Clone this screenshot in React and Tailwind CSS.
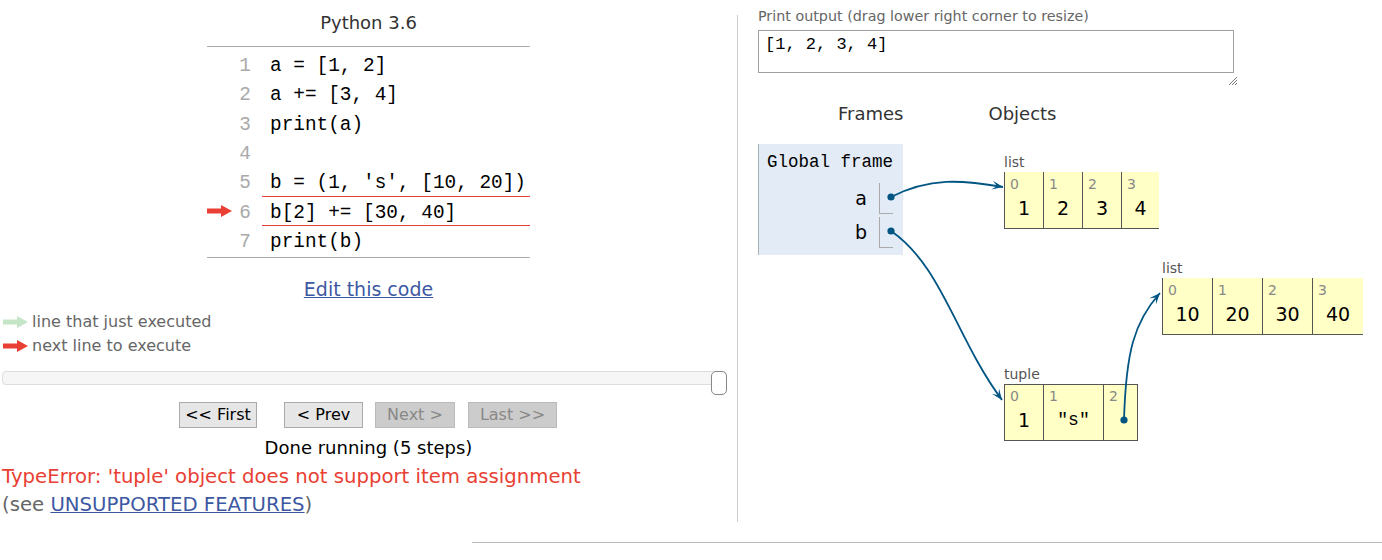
import React from "react";

const SANS = "font-['DejaVu_Sans','Verdana',sans-serif]";
const MONO = "font-['Liberation_Mono','Courier_New',monospace]";

const codeLines = [
  "a = [1, 2]",
  "a += [3, 4]",
  "print(a)",
  "",
  "b = (1, 's', [10, 20])",
  "b[2] += [30, 40]",
  "print(b)",
];

const LegendArrow = ({ color }) => (
  <svg width="25" height="12" viewBox="0 0 25 12" className="shrink-0">
    <rect x="0" y="3.5" width="16" height="5" fill={color} />
    <polygon points="14,0 25,6 14,12" fill={color} />
  </svg>
);

function head(x, y, ang) {
  const L = 11;
  const W = 9;
  const c = Math.cos(ang);
  const s = Math.sin(ang);
  const bx = x - L * c;
  const by = y - L * s;
  const fx = x - L * 0.55 * c;
  const fy = y - L * 0.55 * s;
  const w1 = [bx - (W / 2) * -s, by - (W / 2) * c];
  const w2 = [bx + (W / 2) * -s, by + (W / 2) * c];
  return `${x},${y} ${w1[0]},${w1[1]} ${fx},${fy} ${w2[0]},${w2[1]}`;
}

const arrows = [
  { d: "M891,197 C930,177 962,180 1003,187", end: [1003, 187], from: [962, 180] },
  { d: "M891,231 C942,266 956,338 1002,400", end: [1002, 400], from: [956, 338] },
  { d: "M1124,420 C1126,352 1134,322 1160,293", end: [1160, 293], from: [1134, 322] },
];

const ListObj = ({ label, items, cellW }) => (
  <div>
    <div className={`${SANS} text-[14px] leading-[16px] text-[#555] mb-[2px]`}>{label}</div>
    <div className="flex">
      {items.map((v, i) => (
        <div
          key={i}
          className="h-[57px] border-l border-b border-[#555] bg-[#ffffc6]"
          style={{ width: cellW[i] }}
        >
          <div className={`${SANS} pl-[5px] pt-[5px] text-[14px] leading-[14px] text-[#888]`}>{i}</div>
          <div className={`${SANS} mt-[6px] text-center text-[19px] leading-[22px] text-black`}>{v}</div>
        </div>
      ))}
    </div>
  </div>
);

const Button = ({ children, disabled, w, ml }) => (
  <button
    className={`${SANS} h-[26px] text-[16px] leading-[24px] border ${
      disabled ? "bg-[#cccccc] text-[#888] border-[#bbb]" : "bg-[#e6e6e6] text-black border-[#aaa]"
    }`}
    style={{ width: w, marginLeft: ml }}
  >
    {children}
  </button>
);

export default function App() {
  return (
    <div className="relative w-[1382px] h-[560px] bg-white overflow-hidden">
      <div className="flex items-start">
        {/* Left: code + controls */}
        <div className="mt-[15px] w-[738px] h-[507px] border-r border-[#ccc] shrink-0">
          <div className={`${SANS} text-center text-[18px] leading-[16px] text-[#333]`}>Python 3.6</div>

          <div className="mt-[15px] ml-[207px] w-[323px] border-t border-b border-[#aaa] pt-[3px] pb-[2px]">
            {codeLines.map((line, i) => {
              const cur = i === 5;
              return (
                <div key={i} className="flex items-center h-[29.3px]">
                  <div className="w-[30px] flex items-center">
                    {cur && <LegendArrow color="#e93f34" />}
                  </div>
                  <div className={`${MONO} w-[14px] pt-[4px] text-right text-[19.4px] text-[#aaa]`}>{i + 1}</div>
                  <div
                    className={`${MONO} ml-[11px] flex-1 h-full flex items-center pl-[8px] pt-[4px] text-[19.4px] text-black whitespace-pre ${
                      cur ? "border-t border-b border-[#e93f34]" : ""
                    }`}
                  >
                    {line}
                  </div>
                </div>
              );
            })}
          </div>

          <div className="mt-[19px] text-center">
            <a href="#" className={`${SANS} text-[19px] leading-[24px] text-[#3d58a2] underline`}>
              Edit this code
            </a>
          </div>

          <div className={`${SANS} mt-[8px] ml-[3px] text-[16px] leading-[24px] text-[#666]`}>
            <div className="flex items-center gap-[4px]">
              <LegendArrow color="#c5e5c7" />
              <span>line that just executed</span>
            </div>
            <div className="flex items-center gap-[4px]">
              <LegendArrow color="#e93f34" />
              <span>next line to execute</span>
            </div>
          </div>

          <div className="relative mt-[13px] ml-[2px] w-[725px] h-[24px]">
            <div className="mt-[4px] h-[14px] rounded-[4px] border border-[#ddd] bg-[#f6f6f6]" />
            <div className="absolute top-0 right-0 w-[16px] h-[24px] rounded-[5px] border border-[#888] bg-white" />
          </div>

          <div className="mt-[7px] flex">
            <Button w={78} ml={179}>&lt;&lt; First</Button>
            <Button w={79} ml={27}>&lt; Prev</Button>
            <Button w={80} ml={12} disabled>Next &gt;</Button>
            <Button w={89} ml={13} disabled>Last &gt;&gt;</Button>
          </div>

          <div className={`${SANS} mt-[9px] text-center text-[18px] leading-[22px] text-black`}>
            Done running (5 steps)
          </div>
          <div className={`${SANS} mt-[4px] ml-[2px] text-[19.7px] leading-[28px] text-[#e93f34]`}>
            TypeError: 'tuple' object does not support item assignment
          </div>
          <div className={`${SANS} ml-[2px] text-[19.7px] leading-[28px] text-[#666]`}>
            (see{" "}
            <a href="#" className="text-[#3d58a2] underline">
              UNSUPPORTED FEATURES
            </a>
            )
          </div>
        </div>

        {/* Right: output + visualization */}
        <div className="pl-[20px] pt-[7px]">
          <div className={`${SANS} text-[14.3px] leading-[18px] text-[#666]`}>
            Print output (drag lower right corner to resize)
          </div>
          <div className="relative mt-[5px] w-[476px]">
            <div className={`${MONO} h-[43px] border border-[#a0a0a0] pl-[6px] pt-[4px] text-[17px] leading-[20px] text-black`}>
              [1, 2, 3, 4]
            </div>
            <svg width="10" height="10" viewBox="0 0 10 10" className="absolute right-[-4px] top-[46px]">
              <path d="M9,1 L1,9 M9,4 L4,9 M9,7 L7,9" stroke="#777" strokeWidth="1" />
            </svg>
          </div>

          <div className={`${SANS} mt-[30px] flex text-[18px] leading-[22px] text-[#333]`}>
            <span className="ml-[80px]">Frames</span>
            <span className="ml-[85px]">Objects</span>
          </div>

          <div className="relative mt-[19px] h-[300px]">
            <div className="w-[145px] bg-[#e2ebf6] border-l border-[#a6b3b6] pl-[8px] pt-[8px] pb-[7px]">
              <div className={`${MONO} text-[17.5px] leading-[20px] text-black`}>Global frame</div>
              <div className="mt-[11px] flex flex-col gap-[3px]">
                {["a", "b"].map((n) => (
                  <div key={n} className="flex items-center">
                    <div className={`${SANS} w-[100px] text-right text-[19px] text-black`}>{n}</div>
                    <div className="ml-[12px] w-[14px] h-[31px] border-l border-b border-[#aaa]" />
                  </div>
                ))}
              </div>
            </div>

            <div className="absolute left-[246px] top-[10px]">
              <ListObj label="list" items={[1, 2, 3, 4]} cellW={[39, 39, 39, 38]} />
            </div>
            <div className="absolute left-[404px] top-[116px]">
              <ListObj label="list" items={[10, 20, 30, 40]} cellW={[50, 50, 50, 51]} />
            </div>
            <div className="absolute left-[246px] top-[222px]">
              <div className={`${SANS} text-[14px] leading-[16px] text-[#555] mb-[2px]`}>tuple</div>
              <div className="flex border-r border-[#555] w-fit">
                {[
                  { v: "1", w: 39 },
                  { v: '"s"', w: 60, mono: true },
                  { v: "", w: 34 },
                ].map((c, i) => (
                  <div
                    key={i}
                    className="h-[57px] border-l border-t border-b border-[#555] bg-[#ffffc6]"
                    style={{ width: c.w }}
                  >
                    <div className={`${SANS} pl-[5px] pt-[4px] text-[14px] leading-[14px] text-[#888]`}>{i}</div>
                    <div
                      className={`${c.mono ? MONO + " text-[18px]" : SANS + " text-[19px]"} mt-[6px] text-center leading-[22px] text-black`}
                    >
                      {c.v}
                    </div>
                  </div>
                ))}
              </div>
            </div>
          </div>
        </div>
      </div>

      <div className="mt-[20px] ml-[472px] border-t border-[#bbb]" />

      {/* pointer arrows */}
      <svg className="absolute top-0 left-0 pointer-events-none" width="1382" height="560">
        {arrows.map((a, i) => (
          <g key={i}>
            <path d={a.d} fill="none" stroke="#005583" strokeWidth="1.8" />
            <polygon
              points={head(a.end[0], a.end[1], Math.atan2(a.end[1] - a.from[1], a.end[0] - a.from[0]))}
              fill="#005583"
            />
          </g>
        ))}
        <circle cx="891" cy="197" r="3.6" fill="#005583" />
        <circle cx="891" cy="231" r="3.6" fill="#005583" />
        <circle cx="1124" cy="420" r="3.6" fill="#005583" />
      </svg>
    </div>
  );
}
